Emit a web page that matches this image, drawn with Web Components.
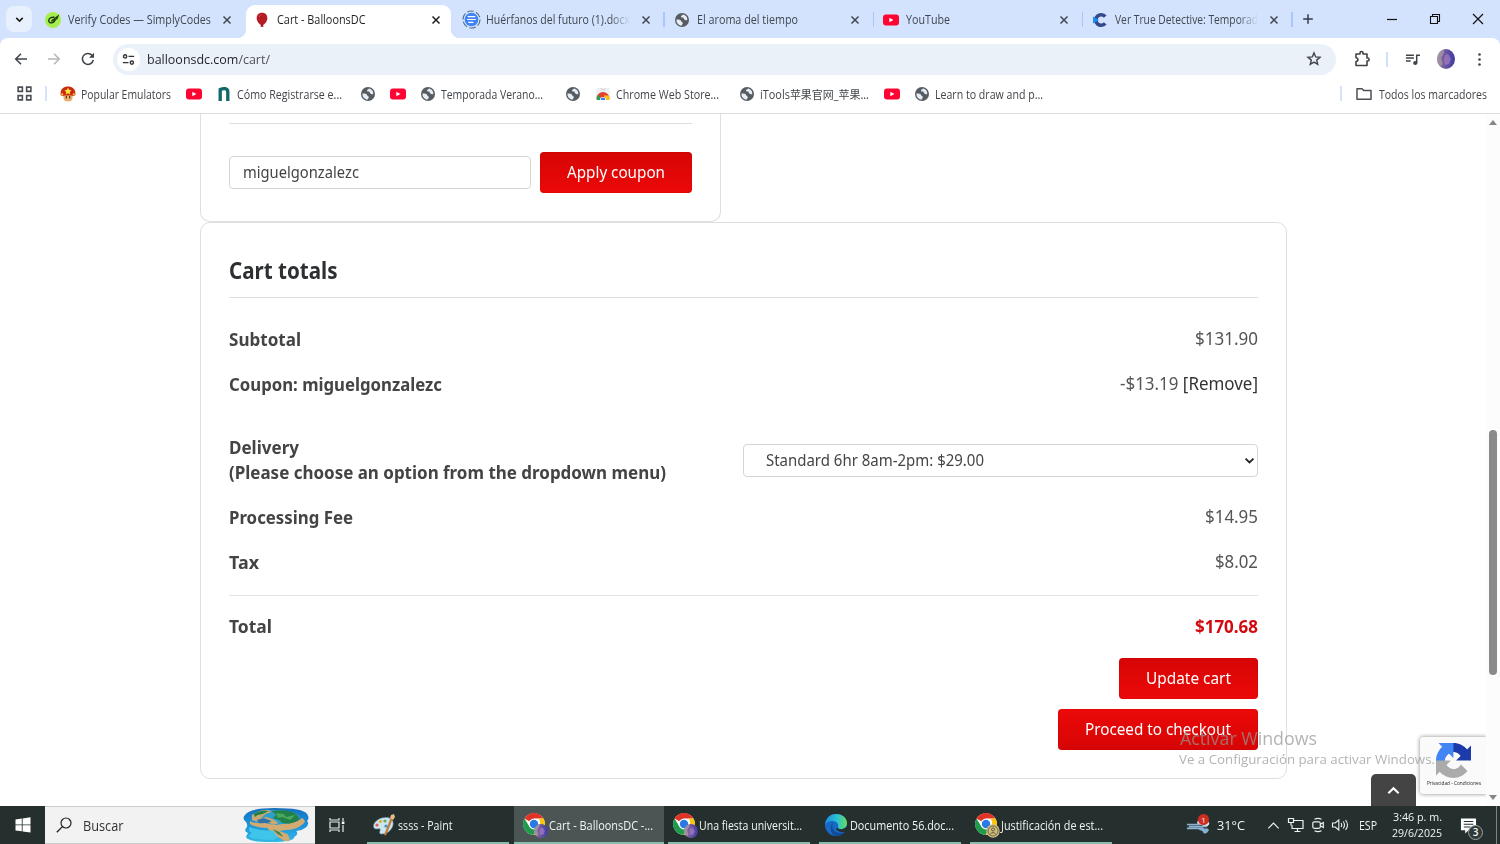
<!DOCTYPE html>
<html lang="es">
<head>
<meta charset="utf-8">
<title>Cart - BalloonsDC</title>
<style>
  html, body { margin: 0; height: 100%; overflow: hidden; background: #fff; }
  body { font-family: "Open Sans", "Noto Sans CJK SC", sans-serif; }
</style>
</head>
<body>
<desktop-screen></desktop-screen>

<script>
const ICONS = {
  down: ['0 0 16 16', '<path d="M4 6l4 4 4-4" fill="none" stroke="#1f1f1f" stroke-width="2"/>'],
  close: ['0 0 16 16', '<path d="M4 4l8 8M12 4l-8 8" fill="none" stroke="currentColor" stroke-width="1.7"/>'],
  plus: ['0 0 16 16', '<path d="M8 2.5v11M2.5 8h11" stroke="#333b47" stroke-width="1.7"/>'],
  min: ['0 0 16 16', '<path d="M3 8.5h10" stroke="#111" stroke-width="1.2"/>'],
  restore: ['0 0 16 16', '<path d="M3.5 5.500h7v7h-7zM5.500 5.500V3.500h7v7h-2" fill="none" stroke="#111" stroke-width="1.100"/>'],
  winclose: ['0 0 16 16', '<path d="M3 3l10 10M13 3L3 13" stroke="#111" stroke-width="1.2"/>'],
  simply: ['0 0 16 16', '<circle cx="8" cy="8" r="8" fill="#a6ee4c"/><path d="M9.500 5.300C6 4.800 3.600 6.500 3.700 8.800c.2 3 5.200 2.800 6.500-1C8.500 7.500 7 8 6.500 9.500M8.500 7.500L12.800 4.300 11.500 7.500" fill="none" stroke="#1d3b12" stroke-width="1.400"/>'],
  balloon: ['0 0 16 16', '<path d="M8 .8c3.500 0 5.300 2.200 5.300 5.400 0 3.100-2.600 6.200-5.300 7.300-2.700-1.100-5.300-4.200-5.300-7.300C2.700 3 4.500.8 8 .8z" fill="#b51c26"/><path d="M7 13h2l.6 1.800H6.400z" fill="#8d141c"/><path d="M5.300 5q.4-2 2-2.300" stroke="#cf4850" stroke-width="1" fill="none"/>'],
  docs: ['0 0 20 20', '<circle cx="10" cy="10" r="9" fill="none" stroke="#56708f" stroke-width="1.200" stroke-dasharray="7 2.400"/><circle cx="10" cy="10" r="7.200" fill="#3f83f5"/><path d="M6 7h8M5.500 10h9M6.500 13h5.500" stroke="#fff" stroke-width="1.300"/>'],
  globe: ['0 0 16 16', '<circle cx="8" cy="8" r="7" fill="#575c61"/><path d="M2.500 7.500c2.200 0 4.500.1 4.700 1.800.1 1 1.600.6 1.600 1.900 0 .9-.8 1.200-1 2.400C4 13.400 2.200 10.500 2.500 7.500z" fill="#e6edf7"/><path d="M9 2.500c-.3 1-1.900.9-2 1.900-.1 1.100 1 .9 1.900 1 1.200.2.500 1.600 1.500 2 .9.400 1.200 1.100 2.800.8C13.700 5.300 11.700 3 9 2.500z" fill="#e6edf7"/>'],
  youtube: ['0 0 16 16', '<rect x="0" y="2.500" width="16" height="11" rx="3" fill="#ff0433"/><path d="M6.300 5.700v4.600L10.400 8z" fill="#fff"/>'],
  cuevana: ['0 0 16 16', '<path d="M13.200 4.600A5.300 5.300 0 1 0 13.200 11.400" fill="none" stroke="#34488b" stroke-width="3.600"/><path d="M1 4.500l6 3.500-6 3.500z" fill="#168df5"/>'],
  back: ['0 0 16 16', '<path d="M14 8H3M8 2.700L2.700 8 8 13.300" fill="none" stroke="#3f4347" stroke-width="1.500"/>'],
  forward: ['0 0 16 16', '<path d="M2 8h11M8 2.700L13.300 8 8 13.300" fill="none" stroke="#b3b5b8" stroke-width="1.500"/>'],
  reload: ['0 0 16 16', '<path d="M13.300 9A5.500 5.500 0 1 1 12 4.200L13.500 6" fill="none" stroke="#3f4347" stroke-width="1.500"/><path d="M14 1.800v5H9z" fill="#3f4347"/>'],
  tune: ['0 0 16 16', '<g fill="none" stroke="#303438" stroke-width="1.500"><circle cx="4.400" cy="4.700" r="1.700"/><path d="M8 4.700h6M2 11.300h6"/><circle cx="11.600" cy="11.300" r="1.700"/></g>'],
  star: ['0 0 16 16', '<path d="M8 1.900l1.700 4 4.300.4-3.300 2.800 1 4.200L8 11.100l-3.700 2.200 1-4.200L2 6.300l4.300-.4z" fill="none" stroke="#3f4347" stroke-width="1.400"/>'],
  puzzle: ['0 0 18 18', '<path d="M3 4h4V3a1.500 1.500 0 0 1 3 0v1h4v4h.6a1.500 1.500 0 0 1 0 3H14v4.500H3v-4a1.900 1.900 0 0 0 0-3.800z" fill="none" stroke="#3f4347" stroke-width="1.600" stroke-linejoin="round"/>'],
  playlist: ['0 0 16 16', '<path d="M1 3.500h8.500M1 6.500h8.500M1 9.500h5M12.500 12V3.500H16" fill="none" stroke="#3f4347" stroke-width="1.600"/><circle cx="10.900" cy="11.700" r="2.200" fill="#3f4347"/>'],
  avatar: ['0 0 18 20', '<defs><clipPath id="c"><ellipse cx="9" cy="10" rx="9" ry="10"/></clipPath><linearGradient id="g"><stop stop-color="#8b7a9a"/><stop offset=".5" stop-color="#6b539f"/><stop offset="1" stop-color="#3c3ca6"/></linearGradient></defs><g clip-path="url(#c)"><path fill="url(#g)" d="M0 0h18v20H0z"/><path d="M0 3l7-3v4L4 9l2 6-4 4-2-2z" fill="#b3a4aa" opacity=".6"/><path d="M8 6l3-1 3 5-2 5-4 1-1-5z" fill="#b384c8" opacity=".6"/></g>'],
  dots: ['0 0 16 16', '<g fill="#3f4347"><circle cx="8" cy="2.700" r="1.400"/><circle cx="8" cy="8" r="1.400"/><circle cx="8" cy="13.300" r="1.400"/></g>'],
  apps: ['0 0 16 16', '<path d="M2 2h4v4H2zM10 2h4v4h-4zM2 10h4v4H2zM10 10h4v4h-4z" fill="none" stroke="#4b4f54" stroke-width="1.500"/>'],
  mushroom: ['0 0 16 16', '<path d="M.6 9C0 3 4 .6 8 .6S16 3 15.400 9c-2 2-12.800 2-14.800 0z" fill="#c92a12"/><path d="M3.500 9.500h9v3.500q-1 2.500-4.500 2.500T3.500 13z" fill="#e9b170"/><path d="M8 1.800l1.200 2.100 2.300.4-1.700 1.700.4 2.400L8 7.300 5.800 8.400l.4-2.400-1.700-1.700 2.300-.4z" fill="#ffe73a"/><path d="M1 8q1-2 2.500.5L2 10zM15 8q-1-2-2.500.5L14 10z" fill="#f6bd32"/><path d="M6.300 10v2.500M9.700 10v2.500" stroke="#3b1a0c" stroke-width="1"/>'],
  nlogo: ['0 0 16 16', '<path d="M4.200 15V3.500c3.500-1.600 7.600-1.400 7.600 2.500v9" fill="none" stroke="#10686a" stroke-width="3.300"/>'],
  store: ['0 0 16 16', '<path d="M1.500 2h13l.8 11H.7z" fill="#eceef0"/><path d="M5.500 2.500q2.500 3 5 0" fill="none" stroke="#cbd0d3"/><path d="M1.500 12.500A6.500 6.500 0 0 1 14.500 12.500z" fill="#e3402f"/><path d="M1.500 14q-.1-3.500 1.800-5.500l3.200 5.500z" fill="#25a152"/><path d="M14.500 14q.3-2.500-1-4.500H9l1 4.500z" fill="#fbc116"/><path d="M4.900 14a3.100 3.100 0 0 1 6.200 0z" fill="#fff"/><path d="M5.600 14a2.400 2.400 0 0 1 4.800 0z" fill="#3b7ded"/>'],
  folder: ['0 0 16 16', '<path d="M1 13.300V2.700h5l1.700 1.800H15v8.800z" fill="none" stroke="#4b4f54" stroke-width="1.500" stroke-linejoin="round"/>'],
  windows: ['0 0 16 16', '<path d="M.5 2.400l6.300-.9v6H.5zM7.600 1.400L15.500.3v7.200H7.600zM.5 8.300h6.300v6l-6.300-.9zM7.600 8.300h7.900v7.200l-7.900-1.100z" fill="#fff"/>'],
  search: ['0 0 16 16', '<circle cx="10" cy="6" r="5" fill="none" stroke="#222" stroke-width="1.200"/><path d="M6.400 9.600L.8 15.300" stroke="#222" stroke-width="1.300"/>'],
  earth: ['0 0 68 36', `
    <defs><linearGradient id="w" x1="0" y1="0" x2="0" y2="1"><stop stop-color="#1470c0"/><stop offset=".55" stop-color="#1c96dc"/><stop offset="1" stop-color="#35b8e4"/></linearGradient></defs>
    <path d="M2 8Q7 1 32 1q29 0 33 6 3 4 0 7 3 3-2 7-4 3-9 3 3 3-2 6 0 5-24 5Q5 35 3 30l2-4q-5-2-1-6 1-4-2-6-3-3 0-6z" fill="url(#w)"/>
    <path d="M7 20q12 5 24 3l5 7-5 3Q8 33 6 29l3-3q-5-3-2-6z" fill="#3fc5ea"/>
    <path d="M9 9Q14 3 31 3q22 0 27 7l-3 4-16 4-18-1Q8 15 9 9z" fill="#2c9fca"/>
    <path d="M9 8q6-5 17-5l3 2-6 2-5 4 6-1 8 3 4 3-5 2-8-4-8 1-6-2z" fill="#c9a873"/>
    <path d="M11 7q5-4 15-3l-6 3-5 1-3 2zM29 4q20-3 27 5l1 4-8 4-9-1-3-3-7-2 4-3z" fill="#238147"/>
    <path d="M34 6l7 1 3 3 9-2-5 5-8-3-5 1z" fill="#48a95e"/>
    <path d="M14 13l7-2 8 3-4 2-8 1z" fill="#2e72ab"/>
    <path d="M7 14q6 3 15 2l10 2 9-1q12 0 19-6 5 3 1 6-7 6-18 6l-6 1 8 3q3 3 2 7-4 1-8-2-6-3-8-8-5 0-6-3-12 0-18-4z" fill="#d2aa72"/>
    <path d="M30 22l7 3 4 5-6-3z" fill="#39865b"/>`],
  taskview: ['0 0 18 18', '<path d="M2 2v2h9V2M2 16v-2h9v2M2 6h9v6H2zM15 2v3M15 9v7" fill="none" stroke="#e8eceb" stroke-width="1.200"/><path d="M13.800 5.500h2.600v2.500h-2.600z" fill="#fff"/>'],
  paint: ['0 0 24 24', '<path d="M10 5c7-2 12 1 11 7-1 5-6 9-11 9-2 0-3-1-2-3 1-3-1-2-4-2C-1 15 2 7 10 5z" fill="#cbe4f0" stroke="#719aae" stroke-width=".6"/><circle cx="5" cy="12" r="1.600" fill="#e75e46"/><circle cx="8.500" cy="8.500" r="1.600" fill="#e8aa2e"/><circle cx="13" cy="8" r="1.600" fill="#62b34e"/><circle cx="14" cy="13" r="1.600" fill="#3a8fce"/><path d="M18.500 5l-3 8-3.500 9 2 .5L18 13l2.500-7z" fill="#c07b38"/><path d="M18 5l1-3 3-1 1 3-2 3z" fill="#e6bd82"/>'],
  chrome: ['0 0 24 24', '<circle cx="11" cy="11" r="10.800" fill="#fff"/><path d="M11 11L1.500 5.500A11 11 0 0 1 20.500 5.500H11z" fill="#df3327"/><path d="M1.500 5.500A11 11 0 0 0 10.500 22l5.300-8.500L11 11 6.500 13.700z" fill="#209b4b"/><path d="M20.500 5.500A11 11 0 0 1 10.500 22l5.300-8.500a6 6 0 0 0-.3-8z" fill="#fbc40f"/><circle cx="11" cy="11" r="5.400" fill="#fff"/><circle cx="11" cy="11" r="4.200" fill="#297ae5"/>'],
  edge: ['0 0 24 24', '<defs><linearGradient id="e1" x1="0" x2="1"><stop stop-color="#1c8de0"/><stop offset=".55" stop-color="#2bc0d5"/><stop offset="1" stop-color="#65df5b"/></linearGradient></defs><circle cx="12" cy="12" r="11" fill="#1669c4"/><path d="M1 12C1.500 5.500 6 1 12.300 1 19 1 23 5.500 23 10c0 4-3 6-6.500 6-2 0-3-1-2.500-2 1-3-1.500-6-5.500-6C5 8 1.500 10 1 12z" fill="url(#e1)"/><path d="M9.500 9.500C6 14 9.500 20 16 20q3 0 5-1.500-3 4.500-8 4.500C6.500 22 4.500 13 9.500 9.500z" fill="#124a94"/><path d="M14 14.300q-.5 2.200 4 2 3-.3 5-3l.6 4-2.600 1.500Q15 20 12 16z" fill="#242f2e"/>'],
  weather: ['0 0 26 24', '<path d="M12 10a5 5 0 0 1 9-3q5 .500 4 4-1 2-4 2z" fill="#dbe6ef"/><path d="M1 11h14M1 15h18M3 13h20" fill="none" stroke="#8db4d3" stroke-width="1.600"/><path d="M13 15h10q3 1 1 3-1 3-5 2-1-3-4-3z" fill="#86b0d2"/>'],
  up: ['0 0 16 16', '<path d="M2.500 11L8 5.500l5.500 5.500" fill="none" stroke="currentColor" stroke-width="var(--sw, 1.200)"/>'],
  monitor: ['0 0 18 18', '<path d="M6 4.500h10v8H5V9M10.500 12.500v3M7.500 15.500h6" fill="none" stroke="#edf0ef" stroke-width="1.200"/><path d="M1.500 2.500h5v4h-5zM4 6.500v3" fill="#242f2e" stroke="#edf0ef" stroke-width="1.200"/>'],
  meet: ['0 0 16 16', '<path d="M4.500 2.200q3.500-1.600 7 0M4.500 13.800q3.500 1.600 7 0" fill="none" stroke="#edf0ef" stroke-width="1.200"/><rect x="2.800" y="4.800" width="7.500" height="6.500" rx="1.500" fill="none" stroke="#edf0ef" stroke-width="1.200"/><path d="M10.300 7.300l3-1.800v5l-3-1.800" fill="none" stroke="#edf0ef" stroke-width="1.200"/>'],
  volume: ['0 0 18 16', '<path d="M1.500 6v4h2.700l3.600 3V3L4.200 6zM10 6q1.500 2 0 4M12.200 4.500q2.600 3.500 0 7M14.500 3q4 5 0 10" fill="none" stroke="#edf0ef" stroke-width="1.100"/>'],
  notice: ['0 0 18 18', '<path d="M1 1.500h16v12.500H9L5.500 17.500V14H1z" fill="#fff"/><path d="M4 4.800h10M4 7.700h10M4 10.600h7" stroke="#242f2e" stroke-width="1.100"/>'],
  person: ['0 0 14 14', '<circle cx="7" cy="7" r="6.700" fill="#cdbb82"/><circle cx="7" cy="7" r="5" fill="none" stroke="#675a34" stroke-width=".8"/><circle cx="7" cy="5.500" r="1.500" fill="none" stroke="#675a34"/><path d="M4.200 10.200q2.800-3.300 5.600 0" fill="none" stroke="#675a34"/>'],
  recaptcha: ['0 0 64 64', `
    <path d="M64 31.955l-.033-1.370V4.687l-7.160 7.160C50.948 4.674 42.033.093 32.050.093c-10.400 0-19.622 4.960-25.458 12.640l11.736 11.860a15.550 15.550 0 0 1 4.754-5.334c2.050-1.600 4.952-2.906 8.968-2.906.485 0 .860.057 1.135.163 4.976.393 9.288 3.140 11.828 7.124l-8.307 8.307L64 31.953" fill="#1c3aa9"/>
    <path d="M31.862.094l-1.370.033H4.594l7.160 7.160C4.580 13.147 0 22.060 0 32.046c0 10.400 4.960 19.622 12.640 25.458L24.500 45.768a15.550 15.550 0 0 1-5.334-4.754c-1.600-2.050-2.906-4.952-2.906-8.968 0-.485.057-.860.163-1.135.393-4.976 3.140-9.288 7.124-11.828l8.307 8.307L31.860.095" fill="#4285f4"/>
    <path d="M.001 32.045l.033 1.370v25.898l7.160-7.160c5.860 7.173 14.774 11.754 24.760 11.754 10.400 0 19.622-4.960 25.458-12.640l-11.736-11.860a15.550 15.550 0 0 1-4.754 5.334c-2.050 1.600-4.952 2.906-8.968 2.906-.485 0-.860-.057-1.135-.163-4.976-.393-9.288-3.140-11.828-7.124l8.307-8.307c-10.522.040-22.400.066-27.295-.005" fill="#ababab"/>`],
  caret: ['0 0 12 12', '<path d="M1.700 4L6 8.200 10.300 4" fill="none" stroke="#222" stroke-width="2"/>']
};

class UiIcon extends HTMLElement {
  connectedCallback() {
    if (this.shadowRoot) return;
    this.attachShadow({ mode: 'open' });
    const [box, body] = ICONS[this.getAttribute('name')];
    const w = this.getAttribute('w') || 16;
    const h = this.getAttribute('h') || w;
    this.shadowRoot.innerHTML = `
      <style>
        :host { display: inline-flex; flex: none; width: ${w}px; height: ${h}px; }
        svg { width: 100%; height: 100%; }
      </style>
      <svg viewBox="${box}" preserveAspectRatio="none">${body}</svg>
    `;
  }
}
customElements.define('ui-icon', UiIcon);

// One-line label that condenses or widens its text to the given width
class FitText extends HTMLElement {
  connectedCallback() {
    if (this.shadowRoot) return;
    this.attachShadow({ mode: 'open' });
    const w = Number(this.getAttribute('w'));
    this.shadowRoot.innerHTML = `
      <style>
        :host { display: inline-block; flex: none; width: ${w}px; white-space: nowrap; }
        span { display: inline-block; transform-origin: 0 50%; }
      </style>
      <span><slot></slot></span>
    `;
    const span = this.shadowRoot.querySelector('span');
    const real = span.getBoundingClientRect().width;
    if (real) span.style.transform = `scaleX(${w / real})`;
  }
}
customElements.define('fit-text', FitText);

class BrowserTab extends HTMLElement {
  connectedCallback() {
    this.attachShadow({ mode: 'open' });
    const a = (n) => this.getAttribute(n);
    const big = a('icon') === 'docs';
    this.shadowRoot.innerHTML = `
      <style>
        :host {
          display: flex;
          align-items: center;
          box-sizing: border-box;
          width: 209.4px;
          height: 32px;
          padding: 0 0 5px ${big ? 7 : 8}px;
          position: relative;
          font-size: 12px;
          color: #41474f;
        }
        :host([active]) {
          height: 33px;
          margin-top: -1px;
          padding-bottom: 4px;
          background: #fff;
          border-radius: 9px 9px 0 0;
          color: #1f1f1f;
          width: 205.4px;
          margin-right: 4px;
        }
        :host([active])::before, :host([active])::after {
          content: "";
          position: absolute;
          bottom: 0;
          width: 9px;
          height: 9px;
        }
        :host([active])::before { left: -9px; background: radial-gradient(circle at 0 0, transparent 9px, #fff 9.5px); }
        :host([active])::after { right: -9px; background: radial-gradient(circle at 100% 0, transparent 9px, #fff 9.5px); }
        fit-text { margin-left: ${big ? 5 : 7}px; }
        :host([fade]) fit-text {
          -webkit-mask-image: linear-gradient(to right, #000 86%, transparent);
        }
        .close { margin-left: auto; margin-right: 12px; }
        :host([active]) .close { margin-right: 8px; }
        .sep { position: absolute; right: 0; top: 6px; width: 1.5px; height: 15px; background: #a8c7fa; }
      </style>
      <ui-icon name="${a('icon')}" w="${big ? 19 : 16}"></ui-icon>
      <fit-text w="${a('w')}"><slot></slot></fit-text>
      <ui-icon class="close" name="close" w="14"></ui-icon>
      ${this.hasAttribute('sep') ? '<div class="sep"></div>' : ''}
    `;
  }
}
customElements.define('browser-tab', BrowserTab);

class TabStrip extends HTMLElement {
  connectedCallback() {
    this.attachShadow({ mode: 'open' });
    this.shadowRoot.innerHTML = `
      <style>
        :host { display: flex; height: 38px; background: #d3e3fd; box-sizing: border-box; padding: 6px 14px 0 6px; }
        .find { width: 26px; height: 26px; border-radius: 8px; background: #e8f0fe; display: flex; align-items: center; justify-content: center; margin-right: 4.5px; }
        .plus { margin: 6px 0 0 8px; }
        .win { margin-left: auto; display: flex; gap: 27px; padding-top: 5px; }
      </style>
      <div class="find"><ui-icon name="down" w="13"></ui-icon></div>
      <browser-tab icon="simply" w="143">Verify Codes — SimplyCodes</browser-tab>
      <browser-tab icon="balloon" w="88.5" active>Cart - BalloonsDC</browser-tab>
      <browser-tab icon="docs" w="144" fade sep>Huérfanos del futuro (1).docx</browser-tab>
      <browser-tab icon="globe" w="101" sep style="padding-left:9px">El aroma del tiempo</browser-tab>
      <browser-tab icon="youtube" w="44" sep style="padding-left:9px">YouTube</browser-tab>
      <browser-tab icon="cuevana" w="143" fade sep style="padding-left:9px">Ver True Detective: Temporad</browser-tab>
      <ui-icon class="plus" name="plus" w="14"></ui-icon>
      <div class="win">
        <ui-icon name="min"></ui-icon>
        <ui-icon name="restore"></ui-icon>
        <ui-icon name="winclose"></ui-icon>
      </div>
    `;
  }
}
customElements.define('tab-strip', TabStrip);

class BrowserToolbar extends HTMLElement {
  connectedCallback() {
    this.attachShadow({ mode: 'open' });
    this.shadowRoot.innerHTML = `
      <style>
        :host { display: block; height: 43px; background: #d3e3fd; }
        .bar { display: flex; align-items: center; height: 42px; background: #fff; border-radius: 8px 8px 0 0; box-sizing: border-box; padding: 0 13px; border-bottom: 0; box-shadow: 0 1px #fff; }
        .fwd { margin: 0 18px 0 17px; }
        .omni { display: flex; align-items: center; box-sizing: border-box; width: 1223px; height: 31px; margin-left: 17px; padding: 0 14px 0 4px; border-radius: 16px; background: #eaf1f9; font-size: 13.5px; color: #1f2328; }
        .chip { width: 23px; height: 23px; border-radius: 50%; background: #fff; display: flex; align-items: center; justify-content: center; margin-right: 7px; }
        .path { color: #4c5257; }
        .star { margin-left: auto; }
        .sep { width: 1.5px; height: 15px; background: #cfe0fc; margin: 0 17px 0 15px; }
      </style>
      <div class="bar">
        <ui-icon name="back"></ui-icon>
        <ui-icon class="fwd" name="forward"></ui-icon>
        <ui-icon name="reload"></ui-icon>
        <div class="omni">
          <div class="chip"><ui-icon name="tune" w="15"></ui-icon></div>
          <fit-text w="123">balloonsdc.com<span class="path">/cart/</span></fit-text>
          <ui-icon class="star" name="star"></ui-icon>
        </div>
        <ui-icon name="puzzle" w="18" style="margin-left:17px"></ui-icon>
        <div class="sep"></div>
        <ui-icon name="playlist" w="15"></ui-icon>
        <ui-icon name="avatar" w="18" h="20" style="margin-left:17px"></ui-icon>
        <ui-icon name="dots" w="15" style="margin-left:17px"></ui-icon>
      </div>
    `;
  }
}
customElements.define('browser-toolbar', BrowserToolbar);

class BookmarkBar extends HTMLElement {
  connectedCallback() {
    this.attachShadow({ mode: 'open' });
    // icon, space before it, label, label width
    const items = [
      ['mushroom', 13, 'Popular Emulators', 90],
      ['youtube', 15],
      ['nlogo', 14, 'Cómo Registrarse e...', 105],
      ['globe', 18],
      ['youtube', 14],
      ['globe', 14, 'Temporada Verano...', 102],
      ['globe', 22],
      ['store', 14, 'Chrome Web Store...', 103],
      ['globe', 20, 'iTools苹果官网_苹果...', 109],
      ['youtube', 15],
      ['globe', 14, 'Learn to draw and p...', 108]
    ];
    this.shadowRoot.innerHTML = `
      <style>
        :host { display: flex; align-items: center; height: 33px; box-sizing: border-box; padding: 0 13px 7px 16px; border-bottom: 1px solid #dcdee0; font-size: 11.8px; color: #41454a; }
        .sep { width: 1.5px; height: 15px; background: #d3e3fd; flex: none; }
        fit-text { margin-left: 5px; }
      </style>
      <ui-icon name="apps" w="17"></ui-icon>
      <div class="sep" style="margin-left:12px"></div>
      ${items.map(([icon, gap, text, w]) => `
        <ui-icon name="${icon}" w="16" style="margin-left:${gap}px"></ui-icon>
        ${text ? `<fit-text w="${w}">${text}</fit-text>` : ''}`).join('')}
      <div class="sep" style="margin-left:auto"></div>
      <ui-icon name="folder" style="margin-left:14.5px"></ui-icon>
      <fit-text w="108" style="margin-left:7px">Todos los marcadores</fit-text>
    `;
  }
}
customElements.define('bookmark-bar', BookmarkBar);

class RedButton extends HTMLElement {
  connectedCallback() {
    this.attachShadow({ mode: 'open' });
    this.shadowRoot.innerHTML = `
      <style>
        :host {
          display: flex;
          align-items: center;
          justify-content: center;
          box-sizing: border-box;
          height: 41px;
          padding: 0 27px 2px;
          border-radius: 4px;
          background: linear-gradient(#ec0909, #d60505);
          box-shadow: inset 0 0 0 1px rgba(200, 0, 0, 0.25);
          color: #fff;
          font: 17px/24px "Noto Sans", sans-serif;
        }
        :host([flip]) { background: linear-gradient(#d60505, #ec0909); }
      </style>
      <fit-text w="${this.getAttribute('w')}"><slot></slot></fit-text>
    `;
  }
}
customElements.define('red-button', RedButton);

class TotalRow extends HTMLElement {
  connectedCallback() {
    this.attachShadow({ mode: 'open' });
    this.shadowRoot.innerHTML = `
      <style>
        :host { display: flex; justify-content: space-between; align-items: center; height: 45px; box-sizing: border-box; line-height: 25px; }
        .label { font-weight: 700; color: #444; display: flex; flex-direction: column; }
        .value { color: #555; margin-top: -2px; font-size: 17.5px; }
        :host([middle]) .value { margin-top: 2px; }
      </style>
      <div class="label"><slot name="label"></slot></div>
      <div class="value"><slot></slot></div>
    `;
  }
}
customElements.define('total-row', TotalRow);

class CartPage extends HTMLElement {
  connectedCallback() {
    this.attachShadow({ mode: 'open' });
    this.shadowRoot.innerHTML = `
      <style>
        :host { display: block; height: 692px; overflow: hidden; background: #fff; font: 17px/25px "Noto Sans", sans-serif; position: relative; }
        .card { box-sizing: border-box; border: 1px solid #dedfe0; margin-left: 200px; padding: 0 28px; }
        .coupon { width: 521px; height: 108px; border-top: 0; border-radius: 0 0 10px 10px; padding-top: 9px; }
        .coupon .line { height: 1px; background: #dedfe0; margin-bottom: 28px; }
        .form { display: flex; align-items: center; justify-content: space-between; }
        .field { box-sizing: border-box; width: 302px; height: 33px; border: 1px solid #d5d5d5; border-radius: 4px; padding: 3px 13px; font-size: 16px; line-height: 25px; color: #444; }
        .totals { width: 1087px; height: 557px; border-radius: 10px; }
        h2 { margin: 0; height: 75px; padding-top: 30px; box-sizing: border-box; border-bottom: 1px solid #dedfe0; font-size: 23px; line-height: 34px; color: #2d3033; }
        .rows { padding-top: 19px; height: 278px; }
        .delivery { height: 88px; padding-top: 17px; }
        .select { display: flex; align-items: center; justify-content: space-between; box-sizing: border-box; width: 515px; height: 33px; padding: 0 2px 0 22px; border: 1px solid #d5d5d5; border-radius: 4px; font-size: 16px; color: #444; }
        .remove { color: #333; }
        .sum { border-top: 1px solid #e4e5e6; padding-top: 8px; }
        .price { color: #d20a10; font-weight: 700; margin-top: 2px; font-size: 17px; }
        .actions { display: flex; flex-direction: column; align-items: flex-end; gap: 10px; margin-top: 9px; }
      </style>
      <section class="card coupon">
        <div class="line"></div>
        <div class="form">
          <div class="field"><fit-text w="116">miguelgonzalezc</fit-text></div>
          <red-button w="98" flip>Apply coupon</red-button>
        </div>
      </section>
      <section class="card totals">
        <h2><fit-text w="108.5">Cart totals</fit-text></h2>
        <div class="rows">
          <total-row><fit-text slot="label" w="72">Subtotal</fit-text><fit-text w="63">$131.90</fit-text></total-row>
          <total-row>
            <fit-text slot="label" w="213">Coupon: miguelgonzalezc</fit-text>
            <fit-text w="138">-$13.19 <span class="remove">[Remove]</span></fit-text>
          </total-row>
          <total-row class="delivery" middle>
            <fit-text slot="label" w="70">Delivery</fit-text>
            <fit-text slot="label" w="437">(Please choose an option from the dropdown menu)</fit-text>
            <div class="select"><fit-text w="218">Standard 6hr 8am-2pm: $29.00</fit-text><ui-icon name="caret" w="11"></ui-icon></div>
          </total-row>
          <total-row><fit-text slot="label" w="124">Processing Fee</fit-text><fit-text w="53">$14.95</fit-text></total-row>
          <total-row><fit-text slot="label" w="30">Tax</fit-text><fit-text w="43">$8.02</fit-text></total-row>
        </div>
        <div class="sum">
          <total-row><fit-text slot="label" w="43">Total</fit-text><fit-text class="price" w="63">$170.68</fit-text></total-row>
        </div>
        <div class="actions">
          <red-button w="85" flip>Update cart</red-button>
          <red-button w="146">Proceed to checkout</red-button>
        </div>
      </section>
      <page-overlays></page-overlays>
      <page-scrollbar></page-scrollbar>
    `;
  }
}

// Floating widgets over the page: activation notice, back-to-top, captcha badge
class PageOverlays extends HTMLElement {
  connectedCallback() {
    this.attachShadow({ mode: 'open' });
    this.shadowRoot.innerHTML = `
      <style>
        .badge { position: absolute; left: 1420px; top: 623px; width: 67px; height: 57px; background: #fafafa; border-radius: 3px 0 0 3px; box-shadow: 0 0 4px #888; display: flex; flex-direction: column; align-items: center; }
        .badge ui-icon { margin-top: 6px; }
        .badge fit-text { font: 6px/8px "Open Sans", sans-serif; color: #222; margin-top: 1px; }
        .top { position: absolute; left: 1370.5px; top: 659.5px; width: 45px; height: 34px; background: #444; border-radius: 5px 5px 0 0; color: #fff; display: flex; align-items: center; justify-content: center; --sw: 2.2; }
        .watermark { position: absolute; left: 1180px; top: 611px; font-family: "Open Sans", sans-serif; color: rgba(150, 150, 150, 0.72); display: flex; flex-direction: column; }
        .watermark .head { font-size: 18.5px; line-height: 25px; }
        .watermark .body { font-size: 13.5px; line-height: 18px; margin-left: -1px; }
      </style>
      <div class="badge">
        <ui-icon name="recaptcha" w="35" h="35"></ui-icon>
        <fit-text w="54">Privacidad - Condiciones</fit-text>
      </div>
      <div class="top"><ui-icon name="up" w="15"></ui-icon></div>
      <div class="watermark">
        <fit-text class="head" w="137">Activar Windows</fit-text>
        <fit-text class="body" w="256">Ve a Configuración para activar Windows.</fit-text>
      </div>
    `;
  }
}

class PageScrollbar extends HTMLElement {
  connectedCallback() {
    this.attachShadow({ mode: 'open' });
    this.shadowRoot.innerHTML = `
      <style>
        :host { position: absolute; right: 0; top: 0; width: 14px; height: 692px; background: #fcfcfc; display: flex; flex-direction: column; align-items: center; box-sizing: border-box; padding: 6px 0; }
        .arrow { border: 4.5px solid transparent; border-top-width: 0; border-bottom: 5px solid #868686; }
        .arrow.dn { border-top: 5px solid #868686; border-bottom-width: 0; margin-top: auto; }
        .thumb { width: 8px; height: 245px; border-radius: 4px; background: #8a8a8a; margin-top: 305px; }
      </style>
      <div class="arrow"></div>
      <div class="thumb"></div>
      <div class="arrow dn"></div>
    `;
  }
}
customElements.define('page-overlays', PageOverlays);
customElements.define('page-scrollbar', PageScrollbar);
customElements.define('cart-page', CartPage);

class TaskApp extends HTMLElement {
  connectedCallback() {
    this.attachShadow({ mode: 'open' });
    const badge = this.getAttribute('badge');
    this.shadowRoot.innerHTML = `
      <style>
        :host { display: flex; align-items: center; box-sizing: border-box; width: 142px; height: 38px; margin-right: 9px; padding-left: 5px; border-bottom: 2px solid #8abcae; color: #f2f5f4; font-size: 12px; }
        :host([active]) { width: 150px; margin: 0 4px 0 -4px; padding-left: 9px; background: #4b5654; }
        .icon { position: relative; display: flex; margin-right: 2px; top: 1px; }
        .icon .mini { position: absolute; right: -1px; bottom: -1px; }
        fit-text { margin-top: 2px; }
      </style>
      <div class="icon">
        <ui-icon name="${this.getAttribute('icon')}" w="24"></ui-icon>
        ${badge ? `<ui-icon class="mini" name="${badge}" w="14"></ui-icon>` : ''}
      </div>
      <fit-text w="${this.getAttribute('w')}"><slot></slot></fit-text>
    `;
  }
}
customElements.define('task-app', TaskApp);

class TaskBar extends HTMLElement {
  connectedCallback() {
    this.attachShadow({ mode: 'open' });
    this.shadowRoot.innerHTML = `
      <style>
        :host { display: flex; align-items: center; height: 38px; background: #242f2e; color: #f2f5f4; font-size: 12px; }
        .start { width: 45px; display: flex; justify-content: center; }
        .search { box-sizing: border-box; width: 270px; height: 38px; background: #f2f2f2; border: 1px solid #c9cbca; border-width: 1px 0; display: flex; align-items: center; padding: 0 5px 0 11px; color: #333; font-size: 14px; }
        .search fit-text { margin-left: 11px; }
        .search .pic { margin-left: auto; }
        .view { width: 52px; display: flex; justify-content: center; margin-left: -4px; margin-right: 4px; }
        .tray { display: flex; align-items: center; margin-left: auto; }
        .weather { position: relative; display: flex; }
        .count { position: absolute; right: 1px; top: 0; width: 11px; height: 11px; border-radius: 50%; background: #cf2d22; font-size: 8px; line-height: 11px; text-align: center; }
        .clock { display: flex; flex-direction: column; line-height: 16px; font-size: 11.5px; width: 50px; align-items: center; margin-left: 15px; }
        .notice { position: relative; display: flex; margin: 0 19px 0 18px; }
        .notice span { position: absolute; left: 8px; top: 8px; box-sizing: border-box; width: 15px; height: 15px; border: 1px solid #9aa3a1; border-radius: 50%; background: #303a39; font-size: 10px; line-height: 13px; text-align: center; font-weight: 600; }
        .desk { width: 1px; height: 38px; background: #7c8482; margin-right: 3px; }
      </style>
      <div class="start"><ui-icon name="windows" w="16"></ui-icon></div>
      <div class="search">
        <ui-icon name="search" w="16"></ui-icon>
        <fit-text w="40.5">Buscar</fit-text>
        <ui-icon class="pic" name="earth" w="67" h="36"></ui-icon>
      </div>
      <div class="view"><ui-icon name="taskview" w="18"></ui-icon></div>
      <task-app icon="paint" w="54.5">ssss - Paint</task-app>
      <task-app icon="chrome" badge="avatar" w="104" active>Cart - BalloonsDC -...</task-app>
      <task-app icon="chrome" badge="avatar" w="103">Una fiesta universit...</task-app>
      <task-app icon="edge" w="104">Documento 56.doc...</task-app>
      <task-app icon="chrome" badge="person" w="102">Justificación de est...</task-app>
      <div class="tray">
        <div class="weather"><ui-icon name="weather" w="24" h="23"></ui-icon><div class="count">1</div></div>
        <fit-text w="28" style="margin-left:7px;font-size:13px">31°C</fit-text>
        <ui-icon name="up" w="15" style="margin-left:21px"></ui-icon>
        <ui-icon name="monitor" w="18" style="margin-left:6px"></ui-icon>
        <ui-icon name="meet" w="16" style="margin-left:5px"></ui-icon>
        <ui-icon name="volume" w="18" h="16" style="margin-left:5px"></ui-icon>
        <fit-text w="18" style="margin-left:10px">ESP</fit-text>
        <div class="clock"><fit-text w="49">3:46 p. m.</fit-text><fit-text w="50">29/6/2025</fit-text></div>
        <div class="notice"><ui-icon name="notice" w="17"></ui-icon><span>3</span></div>
        <div class="desk"></div>
      </div>
    `;
  }
}
customElements.define('task-bar', TaskBar);

class DesktopScreen extends HTMLElement {
  connectedCallback() {
    this.attachShadow({ mode: 'open' });
    this.shadowRoot.innerHTML = `
      <style>
        :host { display: flex; flex-direction: column; width: 1500px; height: 844px; overflow: hidden; }
      </style>
      <tab-strip></tab-strip>
      <browser-toolbar></browser-toolbar>
      <bookmark-bar></bookmark-bar>
      <cart-page></cart-page>
      <task-bar></task-bar>
    `;
  }
}
customElements.define('desktop-screen', DesktopScreen);
</script>
</body>
</html>
